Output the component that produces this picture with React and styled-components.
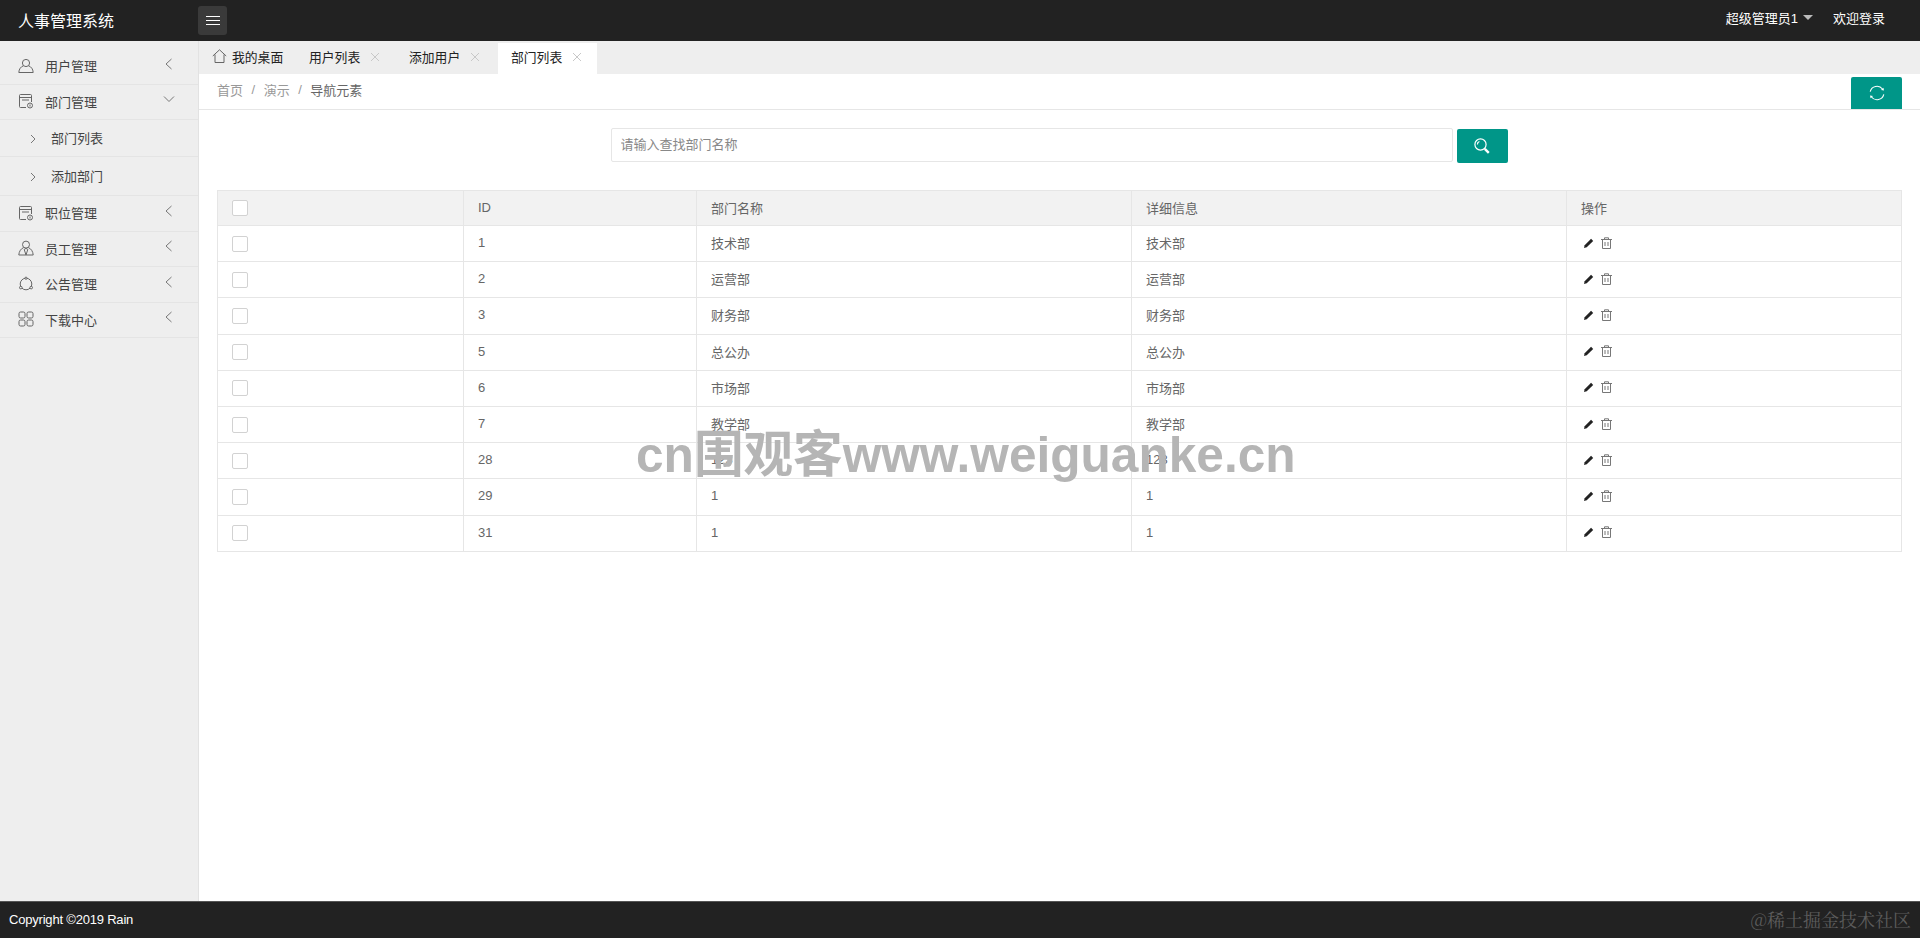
import React from "react";
import styled, { createGlobalStyle } from "styled-components";

const departments = [
  { id: 1, name: "技术部", info: "技术部" },
  { id: 2, name: "运营部", info: "运营部" },
  { id: 3, name: "财务部", info: "财务部" },
  { id: 5, name: "总公办", info: "总公办" },
  { id: 6, name: "市场部", info: "市场部" },
  { id: 7, name: "教学部", info: "教学部" },
  { id: 28, name: "123", info: "123" },
  { id: 29, name: "1", info: "1" },
  { id: 31, name: "1", info: "1" },
];

const UserIcon = () => (
  <MenuSvg viewBox="0 0 16 16">
    <circle cx="8" cy="5" r="3.6" />
    <path d="M5.4 7.8C2.8 8.8 1 11 .8 14.5h14.4C15 11 13.2 8.8 10.6 7.8" />
  </MenuSvg>
);

const DocIcon = () => (
  <MenuSvg viewBox="0 0 16 16">
    <path d="M8 14.5H2.5a1 1 0 0 1-1-1v-11a1 1 0 0 1 1-1h10a1 1 0 0 1 1 1V9" />
    <path d="M1.5 4.5h12M4 7h7" />
    <circle cx="12" cy="12.5" r="2.5" />
    <path d="M12 11.5v2" />
  </MenuSvg>
);

const StaffIcon = () => (
  <MenuSvg viewBox="0 0 16 16">
    <circle cx="8" cy="4.6" r="3.5" />
    <path d="M5.6 7.6C3 8.6 1 11.4.8 15h14.4C15 11.4 13 8.6 10.4 7.6" />
    <path d="M6.2 9.4 8 15l1.8-5.6L8 8.4z" />
  </MenuSvg>
);

const NoticeIcon = () => (
  <MenuSvg viewBox="0 0 16 16">
    <circle cx="8" cy="8" r="5.8" />
    <circle cx="8" cy="2.2" r="1.1" fill="#eee" />
    <circle cx="2.8" cy="11.6" r="1.3" fill="#eee" />
    <circle cx="13.2" cy="11.6" r="1.3" fill="#eee" />
  </MenuSvg>
);

const GridIcon = () => (
  <MenuSvg viewBox="0 0 16 16">
    <rect x="1" y="1" width="6" height="6" rx="1.6" />
    <rect x="9" y="1" width="6" height="6" rx="1.6" />
    <rect x="1" y="9" width="6" height="6" rx="1.6" />
    <rect x="9" y="9" width="6" height="6" rx="1.6" />
  </MenuSvg>
);

const Chevron = ({ dir }) => (
  <ChevronSvg viewBox="0 0 12 12">
    {dir === "left" && <path d="M8.5 1 3 6l5.5 5" />}
    {dir === "down" && <path d="M1 3.5 6 8.5l5-5" />}
    {dir === "right" && <path d="M4 2l4 4-4 4" />}
  </ChevronSvg>
);

const Close = () => (
  <CloseSvg viewBox="0 0 10 10">
    <path d="M1 1l8 8M9 1l-8 8" />
  </CloseSvg>
);

const menuTop = [{ label: "用户管理", icon: <UserIcon /> }];
const menuBottom = [
  { label: "职位管理", icon: <DocIcon /> },
  { label: "员工管理", icon: <StaffIcon /> },
  { label: "公告管理", icon: <NoticeIcon /> },
  { label: "下载中心", icon: <GridIcon /> },
];

function App() {
  return (
    <Page>
      <GlobalStyle />
      <Header>
        <Logo>人事管理系统</Logo>
        <MenuToggle>
          <svg width="14" height="12" viewBox="0 0 14 12" fill="none" stroke="#fff" strokeWidth="1">
            <path d="M0 1.5h14M0 5.5h14M0 9.5h14" />
          </svg>
        </MenuToggle>
        <HeaderRight>
          <HeaderLink>
            超级管理员1<Caret />
          </HeaderLink>
          <HeaderLink>欢迎登录</HeaderLink>
        </HeaderRight>
      </Header>

      <Body>
        <Sidebar>
          {menuTop.map((m) => (
            <MenuRow key={m.label}>
              {m.icon}
              <MenuLabel>{m.label}</MenuLabel>
              <Chevron dir="left" />
            </MenuRow>
          ))}
          <MenuRow>
            <DocIcon />
            <MenuLabel>部门管理</MenuLabel>
            <Chevron dir="down" />
          </MenuRow>
          <SubRow $height={37}>
            <Chevron dir="right" />
            <SubLabel>部门列表</SubLabel>
          </SubRow>
          <SubRow $height={39}>
            <Chevron dir="right" />
            <SubLabel>添加部门</SubLabel>
          </SubRow>
          {menuBottom.map((m) => (
            <MenuRow key={m.label}>
              {m.icon}
              <MenuLabel>{m.label}</MenuLabel>
              <Chevron dir="left" />
            </MenuRow>
          ))}
        </Sidebar>

        <Main>
          <Tabs>
            <Tab $home>
              <svg width="15" height="14" viewBox="0 0 15 14" fill="none" stroke="#666" strokeWidth="1">
                <path d="M.8 7 7.5.8 14.2 7M3 5.5v8h9v-8" />
              </svg>
              我的桌面
            </Tab>
            <Tab>
              用户列表
              <Close />
            </Tab>
            <Tab>
              添加用户
              <Close />
            </Tab>
            <Tab $active>
              部门列表
              <Close />
            </Tab>
          </Tabs>

          <Crumbs>
            <CrumbTrail>
              <CrumbLink>首页</CrumbLink>
              <CrumbSep>/</CrumbSep>
              <CrumbLink>演示</CrumbLink>
              <CrumbSep>/</CrumbSep>
              <CrumbCurrent>导航元素</CrumbCurrent>
            </CrumbTrail>
            <RefreshButton>
              <svg width="16" height="16" viewBox="0 0 16 16" fill="none" stroke="#fff" strokeWidth="1.1">
                <path d="M1.2 6.6A7 7 0 0 1 13.5 4M14.8 9.4A7 7 0 0 1 2.5 12" />
                <path d="M15 5.6l-3-.6 2.4-2.2zM1 10.4l3 .6-2.4 2.2z" fill="#fff" stroke="none" />
              </svg>
            </RefreshButton>
          </Crumbs>

          <Content>
            <SearchBar>
              <SearchInput placeholder="请输入查找部门名称" />
              <SearchButton>
                <svg width="16" height="16" viewBox="0 0 16 16" fill="none" stroke="#fff" strokeWidth="1.2">
                  <circle cx="6.5" cy="6.5" r="5.6" />
                  <path d="M3.4 6.5a3 3 0 0 1 2-3" />
                  <path d="M10.8 10.8l4 4" strokeWidth="2.4" />
                </svg>
              </SearchButton>
            </SearchBar>

            <Table>
              <colgroup>
                <col style={{ width: 246 }} />
                <col style={{ width: 233 }} />
                <col style={{ width: 435 }} />
                <col style={{ width: 435 }} />
                <col />
              </colgroup>
              <thead>
                <tr>
                  <Th>
                    <Check />
                  </Th>
                  <Th>ID</Th>
                  <Th>部门名称</Th>
                  <Th>详细信息</Th>
                  <Th>操作</Th>
                </tr>
              </thead>
              <tbody>
                {departments.map((d) => (
                  <tr key={d.id}>
                    <Td>
                      <Check />
                    </Td>
                    <Td>{d.id}</Td>
                    <Td>{d.name}</Td>
                    <Td>{d.info}</Td>
                    <Td>
                      <Actions>
                        <svg width="10" height="10" viewBox="0 0 11 11">
                          <path d="M0 11l.7-3L7.8.9l2.3 2.3L3 10.3z" fill="#222" />
                        </svg>
                        <svg width="11" height="12" viewBox="0 0 11 12" fill="none" stroke="#777" strokeWidth="1">
                          <path d="M0 2.5h11M3.5 2.5V.8h4v1.7M1.5 2.5v9h8v-9M4 5v4M7 5v4" />
                        </svg>
                      </Actions>
                    </Td>
                  </tr>
                ))}
              </tbody>
            </Table>
          </Content>
        </Main>
      </Body>

      <Footer>
        Copyright ©2019 Rain
        <FooterMark>@稀土掘金技术社区</FooterMark>
      </Footer>
      <Watermark>cn围观客www.weiguanke.cn</Watermark>
    </Page>
  );
}

export default App;

const GlobalStyle = createGlobalStyle`
  html, body {
    margin: 0;
    padding: 0;
    background: #fff;
  }
  * {
    box-sizing: border-box;
  }
`;

const Page = styled.div`
  position: relative;
  display: flex;
  flex-direction: column;
  height: 938px;
  overflow: hidden;
  font-family: "Liberation Sans", "Noto Sans CJK SC", sans-serif;
  font-size: 14px;
  color: #666;
`;

const Header = styled.header`
  display: flex;
  align-items: center;
  flex: 0 0 41px;
  background: #222;
  color: #fff;
`;

const Logo = styled.div`
  width: 198px;
  padding: 0 0 2px 18px;
  font-size: 16px;
`;

const MenuToggle = styled.div`
  display: flex;
  align-items: center;
  justify-content: center;
  width: 29px;
  height: 29px;
  border-radius: 3px;
  background: #3a3a3a;
`;

const HeaderRight = styled.div`
  display: flex;
  align-items: center;
  gap: 20px;
  margin-left: auto;
  padding: 0 35px 4px 0;
`;

const HeaderLink = styled.span`
  display: flex;
  align-items: center;
  font-size: 13px;
  line-height: 20px;
  color: #fff;
`;

const Caret = styled.i`
  width: 0;
  height: 0;
  margin: -2px 0 0 5px;
  border-left: 5.5px solid transparent;
  border-right: 5.5px solid transparent;
  border-top: 5.5px solid #bbb;
`;

const Body = styled.div`
  display: flex;
  flex: 1;
  min-height: 0;
`;

const Sidebar = styled.aside`
  flex: 0 0 199px;
  padding-top: 8px;
  background: #eee;
  border-right: 1px solid #e2e2e2;
`;

const MenuRow = styled.div`
  display: flex;
  align-items: center;
  height: 35.5px;
  padding: 0 23px 1px 18px;
  border-bottom: 1px solid #e4e4e4;
  color: #555;
  font-size: 13px;
`;

const MenuSvg = styled.svg`
  flex: none;
  width: 16px;
  height: 16px;
  fill: none;
  stroke: #666;
  stroke-width: 1;
`;

const MenuLabel = styled.span`
  flex: 1;
  margin-left: 11px;
  color: #444;
`;

const ChevronSvg = styled.svg`
  flex: none;
  width: 12px;
  height: 12px;
  margin-top: -4px;
  fill: none;
  stroke: #777;
  stroke-width: 1;
`;

const SubRow = styled.div`
  display: flex;
  align-items: center;
  height: ${(p) => p.$height}px;
  padding: 0 0 1px 27px;
  border-bottom: 1px solid #e4e4e4;
  svg {
    margin-top: 2px;
  }
`;

const SubLabel = styled.span`
  margin-left: 12px;
  font-size: 13px;
  color: #444;
`;

const Main = styled.main`
  display: flex;
  flex-direction: column;
  flex: 1;
  min-width: 0;
`;

const Tabs = styled.nav`
  display: flex;
  align-items: flex-end;
  flex: 0 0 33px;
  padding-left: 13px;
  background: #eee;
`;

const Tab = styled.div`
  display: flex;
  align-items: center;
  gap: ${(p) => (p.$home ? "5px" : "10px")};
  width: ${(p) => (p.$home ? "97px" : p.$active ? "99px" : "100px")};
  height: 31px;
  padding: ${(p) => (p.$active ? "0 0 5px 13px" : "0 0 5px 0")};
  margin-left: ${(p) => (p.$active ? "-11px" : "0")};
  font-size: 12.8px;
  color: #222;
  background: ${(p) => (p.$active ? "#fff" : "transparent")};
`;

const CloseSvg = styled.svg`
  width: 10px;
  height: 10px;
  margin-top: 2px;
  fill: none;
  stroke: #c8c8c8;
  stroke-width: 1;
`;

const Crumbs = styled.div`
  display: flex;
  align-items: center;
  flex: 0 0 36px;
  padding: 0 18px;
  border-bottom: 1px solid #e6e6e6;
  font-size: 13px;
`;

const CrumbTrail = styled.div`
  display: flex;
  align-items: center;
  padding-bottom: 5px;
`;

const CrumbLink = styled.span`
  color: #999;
`;

const CrumbSep = styled.span`
  margin: 0 8.5px;
  color: #999;
`;

const CrumbCurrent = styled.span`
  color: #666;
`;

const RefreshButton = styled.div`
  display: flex;
  align-items: center;
  justify-content: center;
  align-self: flex-end;
  width: 51px;
  height: 32px;
  margin-left: auto;
  border-radius: 2px 2px 0 0;
  background: #009688;
`;

const Content = styled.section`
  padding: 18px 18px 0;
`;

const SearchBar = styled.div`
  display: flex;
  justify-content: center;
  gap: 4px;
  height: 35px;
  margin-bottom: 27px;
  padding-right: 1px;
`;

const SearchInput = styled.input`
  width: 842px;
  height: 34px;
  padding: 0 9px 2px;
  border: 1px solid #e6e6e6;
  border-radius: 2px;
  outline: none;
  font-family: inherit;
  font-size: 13px;
  &::placeholder {
    color: #888;
  }
`;

const SearchButton = styled.div`
  display: flex;
  align-items: center;
  justify-content: center;
  width: 51px;
  height: 34px;
  margin-top: 1px;
  border-radius: 2px;
  background: #009688;
`;

const Table = styled.table`
  width: 100%;
  table-layout: fixed;
  border-collapse: collapse;
  font-size: 13px;
`;

const Th = styled.th`
  height: 35px;
  padding: 0 14px 2px;
  border: 1px solid #e6e6e6;
  background: #f2f2f2;
  color: #666;
  font-weight: 400;
  text-align: left;
`;

const Td = styled.td`
  height: 36.2px;
  padding: 0 14px 2px;
  border: 1px solid #e6e6e6;
  color: #666;
`;

const Check = styled.span`
  display: block;
  width: 16px;
  height: 16px;
  margin-top: 2px;
  border: 1px solid #d2d2d2;
  border-radius: 2px;
  background: #fff;
`;

const Actions = styled.div`
  display: flex;
  align-items: center;
  gap: 7px;
  padding-left: 3px;
`;

const Footer = styled.footer`
  display: flex;
  align-items: center;
  justify-content: space-between;
  flex: 0 0 37px;
  padding: 0 9px 2px 9px;
  border-top: 1px solid #555;
  background: #222;
  color: #fff;
  font-size: 13px;
  letter-spacing: -0.2px;
`;

const FooterMark = styled.span`
  font-family: "Noto Serif CJK SC", "Noto Sans CJK SC", serif;
  font-size: 18px;
  letter-spacing: 0;
  color: #5c5c5c;
`;

const Watermark = styled.div`
  position: absolute;
  left: 636px;
  top: 422px;
  font-family: "Liberation Sans", "Noto Sans CJK SC", sans-serif;
  font-size: 49.6px;
  font-weight: 700;
  line-height: 66px;
  color: #b5b5b5;
  white-space: nowrap;
`;
